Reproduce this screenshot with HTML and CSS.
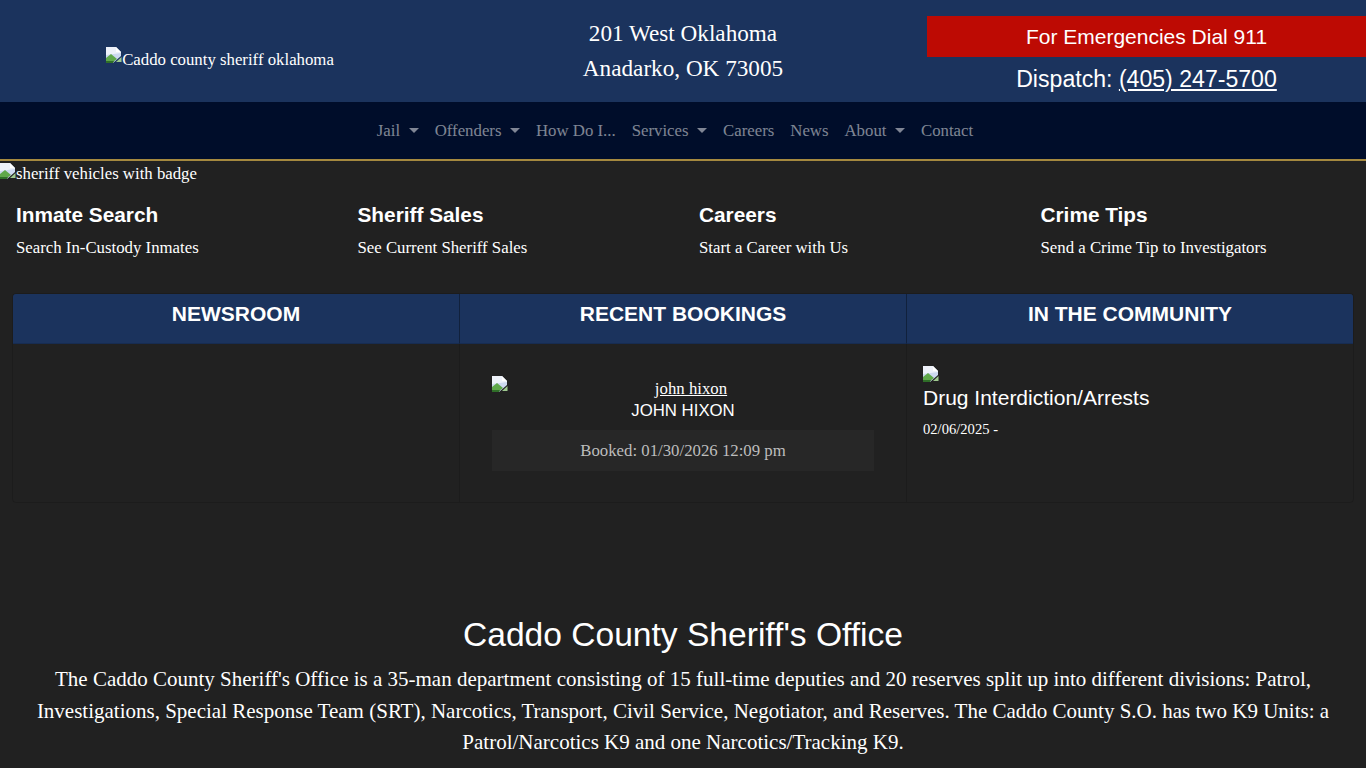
FILE: index.html
```html
<!DOCTYPE html>
<html lang="en">
<head>
<meta charset="utf-8">
<title>Caddo County Sheriff's Office</title>
<link rel="stylesheet" href="styles.css">
</head>
<body>
<svg class="sprite" width="0" height="0" aria-hidden="true">
  <symbol id="broken" viewBox="0 0 16 16">
    <path d="M0 0H10L15 5V9L7 16H0Z" fill="#cdd9f0"/>
    <path d="M0 0H10V5H15V6L0 8Z" fill="#eef2fa"/>
    <path d="M10 0L15 5H10Z" fill="#ffffff"/>
    <path d="M0 15V11L5 7L11 12L7 15Z" fill="#5fa84a"/>
    <path d="M0 16V14H8L7 16Z" fill="#2f6e28"/>
    <path d="M15.500 10V15H10Z" fill="#9fc98f"/>
  </symbol>
</svg>
<header class="top">
  <div class="logo"><svg class="broken"><use href="#broken"/></svg>Caddo county sheriff oklahoma</div>
  <div class="address">201 West Oklahoma<br>Anadarko, OK 73005</div>
  <div class="contact">
    <div class="emergency">For Emergencies Dial 911</div>
    <div class="dispatch">Dispatch: <a href="#">(405) 247-5700</a></div>
  </div>
</header>
<nav class="nav">
  <a href="#" class="drop">Jail</a>
  <a href="#" class="drop">Offenders</a>
  <a href="#">How Do I...</a>
  <a href="#" class="drop">Services</a>
  <a href="#">Careers</a>
  <a href="#">News</a>
  <a href="#" class="drop">About</a>
  <a href="#">Contact</a>
</nav>
<div class="hero"><svg class="broken"><use href="#broken"/></svg>sheriff vehicles with badge</div>
<section class="links">
  <div class="link"><h3>Inmate Search</h3><p>Search In-Custody Inmates</p></div>
  <div class="link"><h3>Sheriff Sales</h3><p>See Current Sheriff Sales</p></div>
  <div class="link"><h3>Careers</h3><p>Start a Career with Us</p></div>
  <div class="link"><h3>Crime Tips</h3><p>Send a Crime Tip to Investigators</p></div>
</section>
<section class="deck">
  <article class="card">
    <h2 class="card-head">NEWSROOM</h2>
    <div class="card-body"></div>
  </article>
  <article class="card">
    <h2 class="card-head">RECENT BOOKINGS</h2>
    <div class="card-body booking">
      <a href="#" class="mug"><svg class="broken"><use href="#broken"/></svg><span class="mug-alt">john hixon</span></a>
      <div class="name">JOHN HIXON</div>
      <div class="booked">Booked: 01/30/2026 12:09 pm</div>
    </div>
  </article>
  <article class="card">
    <h2 class="card-head">IN THE COMMUNITY</h2>
    <div class="card-body community">
      <svg class="broken block"><use href="#broken"/></svg>
      <div class="story">Drug Interdiction/Arrests</div>
      <div class="date">02/06/2025 -</div>
    </div>
  </article>
</section>
<section class="about">
  <h1>Caddo County Sheriff's Office</h1>
  <p>The Caddo County Sheriff's Office is a 35-man department consisting of 15 full-time deputies and 20 reserves split up into different divisions: Patrol, Investigations, Special Response Team (SRT), Narcotics, Transport, Civil Service, Negotiator, and Reserves. The Caddo County S.O. has two K9 Units: a Patrol/Narcotics K9 and one Narcotics/Tracking K9.</p>
</section>
</body>
</html>
```
FILE: styles.css
```css
* { box-sizing: border-box; }
html, body { margin: 0; padding: 0; }
body {
  background: #212121;
  color: #fff;
  font-family: "Liberation Serif", "Times New Roman", serif;
  font-size: 16.8px;
  line-height: 24px;
  overflow: hidden;
  height: 768px;
}
.sprite { position: absolute; }
.broken { width: 16px; height: 16px; display: inline-block; vertical-align: -1px; }
.broken.block { display: block; }

.top {
  display: grid;
  grid-template-columns: 440px 1fr 439px;
  height: 102px;
  background: #1b335d;
}
.logo { display: flex; align-items: flex-end; justify-content: center; padding-bottom: 30px; }
.logo .broken { margin-bottom: 9px; }
.address {
  padding-top: 16px;
  padding-right: 1px;
  text-align: center;
  font-size: 23.200px;
  line-height: 35px;
}
.contact { padding-top: 16px; text-align: center; font-family: "Liberation Sans", Arial, sans-serif; }
.emergency { height: 41px; line-height: 41px; background: #bd0a03; font-size: 21px; }
.dispatch { font-size: 23.100px; line-height: 44px; }
.dispatch a { color: #fff; }

.nav {
  display: flex;
  justify-content: center;
  align-items: center;
  height: 59px;
  padding-right: 16px;
  background: #000d2a;
  border-bottom: 2px solid #a5893f;
}
.nav a { padding: 0 8px; color: rgba(255, 255, 255, .5); text-decoration: none; }
.nav a.drop::after {
  content: "";
  display: inline-block;
  margin-left: 8.500px;
  vertical-align: 3px;
  border-top: 5px solid;
  border-left: 5px solid transparent;
  border-right: 5px solid transparent;
}

.hero { height: 24px; padding-top: 1px; line-height: 23px; }
.hero .broken { vertical-align: 0; }

.links {
  display: grid;
  grid-template-columns: repeat(4, 1fr);
  height: 108px;
  padding-top: 18px;
}
.link { padding: 0 16px; }
.link h3 {
  margin: 0 0 9px;
  font: 700 20.800px/24px "Liberation Sans", Arial, sans-serif;
}
.link p { margin: 0; }

.deck {
  display: grid;
  grid-template-columns: 446px 447px 1fr;
  margin: 0 12px;
  height: 210px;
  border-radius: 4px;
  overflow: hidden;
  border: 1px solid rgba(0, 0, 0, .15);
}
.card { display: flex; flex-direction: column; }
.card-head {
  margin: 0;
  height: 50px;
  padding-top: 7px;
  background: #1b335d;
  border-left: 1px solid rgba(0, 0, 0, .35);
  border-bottom: 1px solid rgba(0, 0, 0, .125);
  text-align: center;
  font: 700 21px/25px "Liberation Sans", Arial, sans-serif;
}
.card:first-child .card-head { border-left: 0; }
.card-body { flex: 1; border-left: 1px solid rgba(0, 0, 0, .15); }
.card:first-child .card-body { border-left: 0; }
.booking { padding: 33px 32px 0; text-align: center; }
.mug { display: block; color: #fff; line-height: 24px; }
.mug .broken { float: left; margin-top: -1px; }
.name { font: 16.800px/20px "Liberation Sans", Arial, sans-serif; }
.booked {
  margin-top: 9px;
  height: 41px;
  line-height: 41px;
  background: #272727;
  color: #bdbdbd;
}
.community { padding: 22px 16px 0; }
.story { font: 21px/24px "Liberation Sans", Arial, sans-serif; padding-top: 4px; }
.date { margin-top: 7px; font-size: 14.600px; line-height: 24px; }

.about { padding: 112px 16px 0; text-align: center; }
.about h1 {
  margin: 0 0 9px;
  font: 400 33.600px/40px "Liberation Sans", Arial, sans-serif;
}
.about p { margin: 0; font-size: 21px; line-height: 31.500px; }
```
